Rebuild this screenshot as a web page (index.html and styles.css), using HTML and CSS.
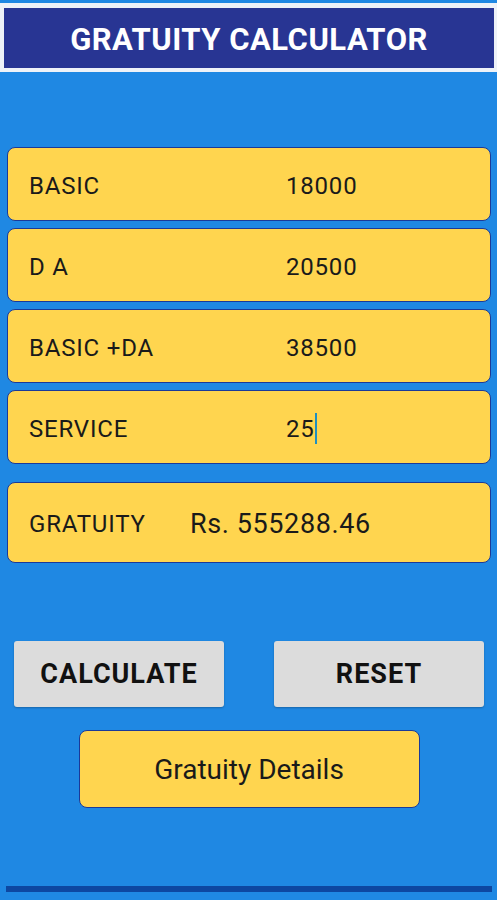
FILE: index.html
```html
<!DOCTYPE html>
<html>
<head>
<meta charset="utf-8">
<link rel="stylesheet" href="styles.css">
</head>
<body>
<div class="screen">
  <div class="header-wrap">
    <div class="header">GRATUITY CALCULATOR</div>
  </div>
  <div class="fields">
    <div class="field"><span class="label">BASIC</span><span class="value">18000</span></div>
    <div class="field"><span class="label">D A</span><span class="value">20500</span></div>
    <div class="field"><span class="label">BASIC +DA</span><span class="value">38500</span></div>
    <div class="field"><span class="label">SERVICE</span><span class="value">25<span class="cursor"></span></span></div>
  </div>
  <div class="field result"><span class="label">GRATUITY</span><span class="amount">Rs. 555288.46</span></div>
  <div class="buttons">
    <div class="btn">CALCULATE</div>
    <div class="btn">RESET</div>
  </div>
  <div class="details-row">
    <div class="details">Gratuity Details</div>
  </div>
  <div class="bottom-bar"></div>
</div>
</body>
</html>
```
FILE: styles.css
```css
html, body {
  margin: 0;
  padding: 0;
}
body {
  background: #1f88e3;
  font-family: Roboto, "Noto Sans", sans-serif;
  width: 497px;
  height: 900px;
  overflow: hidden;
}
.screen {
  display: flex;
  flex-direction: column;
  padding-top: 3px;
}
.header-wrap {
  background: #eef2f8;
  padding: 5px 3px 4px 4px;
}
.header {
  background: #283593;
  color: #fff;
  font-weight: 700;
  font-size: 31px;
  letter-spacing: 0.5px;
  height: 60px;
  padding-top: 3px;
  box-sizing: border-box;
  display: flex;
  align-items: center;
  justify-content: center;
}
.fields {
  display: flex;
  flex-direction: column;
  gap: 7px;
  margin: 75px 6px 0 7px;
}
.field {
  background: #ffd54f;
  border: 1.5px solid #1a3a9a;
  border-radius: 8px;
  height: 72px;
  display: flex;
  align-items: center;
  font-size: 24px;
  letter-spacing: 0.8px;
  color: #1a1a1a;
  padding-top: 3px;
  box-sizing: content-box;
}
.fields .field {
  height: 69px;
}
.label {
  margin-left: 21px;
  width: 257px;
}
.value {
  display: inline-flex;
  align-items: center;
}
.cursor {
  display: inline-block;
  width: 2px;
  height: 31px;
  background: #1f8fc0;
}
.result {
  margin: 18px 6px 0 7px;
  height: 76px;
}
.result .label {
  width: 161px;
}
.amount {
  font-size: 27px;
  letter-spacing: 0.6px;
}
.buttons {
  display: flex;
  justify-content: space-between;
  margin: 78px 13px 0 14px;
}
.btn {
  width: 210px;
  height: 66px;
  background: #dcdcdc;
  border-radius: 3px;
  display: flex;
  align-items: center;
  justify-content: center;
  font-weight: 700;
  font-size: 27px;
  letter-spacing: 1px;
  color: #111;
  box-shadow: 0 1px 2px rgba(0,0,0,0.25);
}
.details-row {
  display: flex;
  justify-content: center;
  margin-top: 23px;
  padding-left: 1px;
}
.details {
  width: 339px;
  height: 76px;
  background: #ffd54f;
  border: 1.5px solid #1a3a9a;
  border-radius: 8px;
  display: flex;
  align-items: center;
  justify-content: center;
  font-size: 28px;
  color: #1a1a1a;
}
.bottom-bar {
  margin: 78px 5px 0 6px;
  height: 6px;
  background: #0d47a1;
}
```
